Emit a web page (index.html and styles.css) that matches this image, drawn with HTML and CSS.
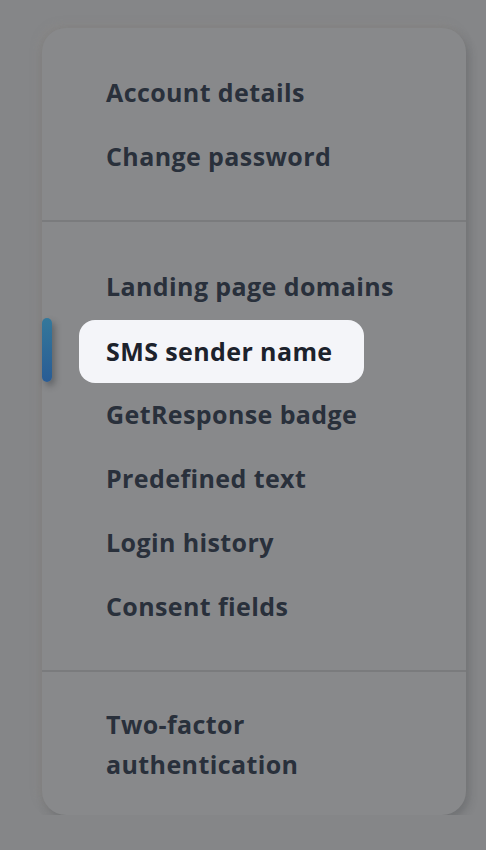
FILE: index.html
```html
<!DOCTYPE html>
<html lang="en">
<head>
<meta charset="utf-8">
<title>Settings menu</title>
<link rel="stylesheet" href="styles.css">
</head>
<body>
<nav class="panel">
  <ul class="section">
    <li class="item"><span class="label">Account details</span></li>
    <li class="item"><span class="label">Change password</span></li>
  </ul>
  <ul class="section">
    <li class="item"><span class="label">Landing page domains</span></li>
    <li class="item active"><span class="indicator"></span><span class="label">SMS sender name</span></li>
    <li class="item"><span class="label">GetResponse badge</span></li>
    <li class="item"><span class="label">Predefined text</span></li>
    <li class="item"><span class="label">Login history</span></li>
    <li class="item"><span class="label">Consent fields</span></li>
  </ul>
  <ul class="section">
    <li class="item multi"><span class="label">Two-factor<br>authentication</span></li>
  </ul>
</nav>
</body>
</html>
```
FILE: styles.css
```css
html, body {
  margin: 0;
  padding: 0;
  background: #858688;
}
body {
  padding: 28px 20px 0 42px;
  font-family: "Open Sans", "Noto Sans", sans-serif;
}
.panel {
  width: 424px;
  height: 787px;
  box-sizing: border-box;
  background: #88898b;
  border-radius: 24px;
  box-shadow: 3px 5px 10px rgba(40, 44, 52, 0.22), -3px -3px 8px rgba(140, 136, 128, 0.35);
}
.section {
  list-style: none;
  margin: 0;
  padding: 32px 0;
  border-bottom: 2px solid #7a7b7d;
}
.section:last-child {
  border-bottom: none;
}
.item {
  position: relative;
  height: 64px;
  display: flex;
  align-items: center;
  padding-left: 37px;
}
.label {
  display: inline-flex;
  align-items: center;
  height: 63px;
  padding: 0 31px 0 27px;
  border-radius: 16px;
  font-size: 25px;
  font-weight: 700;
  letter-spacing: 0.4px;
  color: #29303b;
  white-space: nowrap;
}
.item.active .label {
  background: #f4f5f9;
  color: #1c222c;
  margin-top: 2px;
}
.indicator {
  position: absolute;
  left: 0;
  top: 0;
  width: 10px;
  height: 64px;
  border-radius: 5px;
  background: linear-gradient(#34789b, #295c95);
  box-shadow: 3px 4px 6px rgba(30, 34, 40, 0.35);
}
.item.multi {
  height: 80px;
}
.item.multi .label {
  height: 80px;
  line-height: 40px;
  white-space: normal;
}
```
